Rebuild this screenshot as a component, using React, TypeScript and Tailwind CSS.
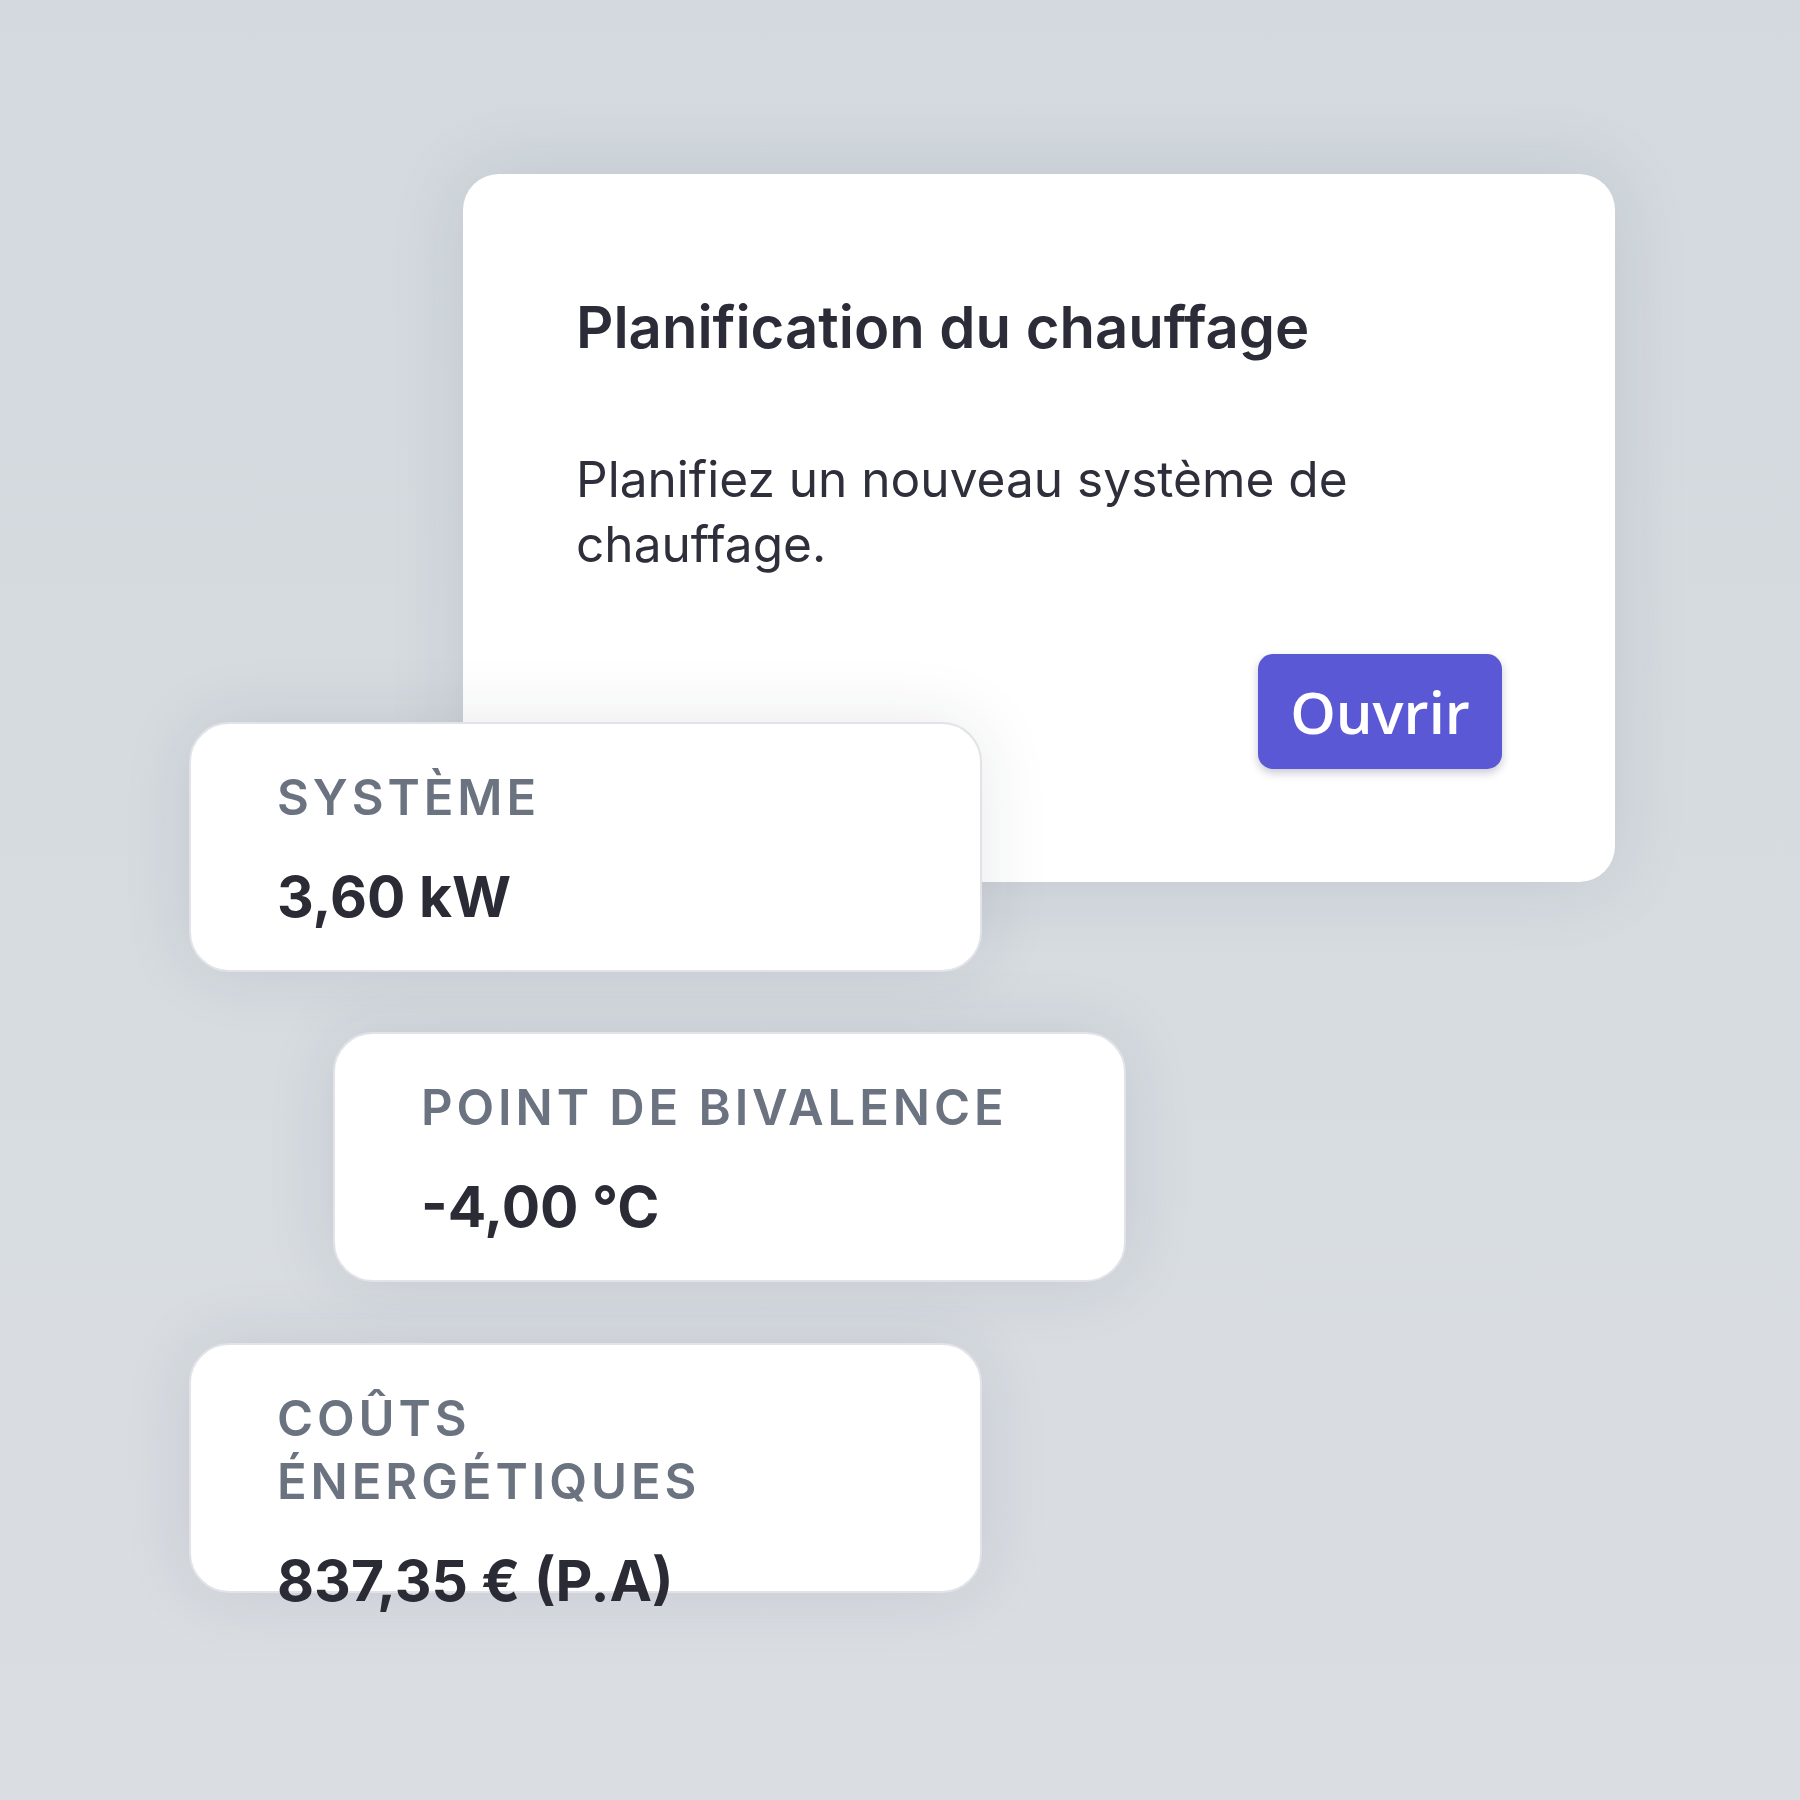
import React from 'react';

type Stat = { label: string; value: string; offset: string };

const stats: Stat[] = [
  { label: 'SYSTÈME', value: '3,60 kW', offset: 'ml-[189px] -mt-[160px]' },
  { label: 'POINT DE BIVALENCE', value: '-4,00 °C', offset: 'ml-[333px] mt-[60px]' },
  { label: 'COÛTS ÉNERGÉTIQUES', value: '837,35 € (P.A)', offset: 'ml-[189px] mt-[61px]' },
];

function StatCard({ label, value, offset }: Stat) {
  return (
    <div
      className={`${offset} relative w-[793px] h-[250px] shrink-0 rounded-[40px] bg-white border-2 border-[#e1e3e8] pt-[42px] pl-[86px] pr-[80px] shadow-[0_0_70px_rgba(30,40,60,0.10)]`}
    >
      <p className="text-[49px] leading-[63px] font-semibold tracking-[0.08em] text-[#6b7280]">{label}</p>
      <p className="mt-[33px] text-[57px] leading-[70px] font-bold text-[#2a2b35] whitespace-nowrap">{value}</p>
    </div>
  );
}

export default function App() {
  return (
    <div className="w-[1800px] h-[1800px] overflow-hidden bg-gradient-to-b from-[#d3d9de] to-[#dadee3] font-['Inter','Noto_Sans',sans-serif]">
      <div className="flex flex-col items-start">
        {/* Main card */}
        <div className="relative ml-[463px] mt-[174px] w-[1152px] h-[708px] shrink-0 rounded-[36px] bg-white px-[113px] pt-[117px] shadow-[0_0_80px_rgba(30,40,60,0.10)]">
          <h1 className="text-[58px] leading-[72px] font-semibold text-[#2b2c38]">Planification du chauffage</h1>
          <p className="mt-[84px] text-[49.6px] leading-[65px] font-normal text-[#2e2f3a]">
            Planifiez un nouveau système de chauffage.
          </p>
          <div className="mt-[77px] flex justify-end">
            <button className="w-[244px] h-[115px] rounded-[15px] bg-[#5b58d6] text-white text-[58px] font-semibold font-['Open_Sans','Noto_Sans',sans-serif] shadow-[0_4px_8px_rgba(40,40,90,0.25)]">
              Ouvrir
            </button>
          </div>
        </div>

        {stats.map((s) => (
          <StatCard key={s.label} {...s} />
        ))}
      </div>
    </div>
  );
}
